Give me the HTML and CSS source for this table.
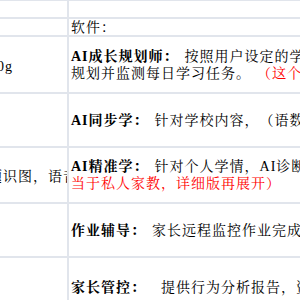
FILE: index.html
```html
<!DOCTYPE html>
<html lang="zh">
<head>
<meta charset="utf-8">
<title>功能表</title>
<link rel="stylesheet" href="styles.css">
</head>
<body>
<div class="sheet">
  <div class="cell left"></div>
  <div class="cell right"></div>

  <div class="cell left"></div>
  <div class="cell right"><p>软件：</p></div>

  <div class="cell left"><p>重量1500g</p></div>
  <div class="cell right">
    <p><b>AI成长规划师：</b><span class="gap"></span>按照用户设定的学习目标，</p>
    <p>规划并监测每日学习任务。<span class="gap"></span><span class="red">（这个功能</span></p>
  </div>

  <div class="cell left"></div>
  <div class="cell right">
    <p><b>AI同步学：</b><span class="gap"></span>针对学校内容，（语数英</p>
  </div>

  <div class="cell left"><p>拍照搜题识图，语音</p></div>
  <div class="cell right">
    <p><b>AI精准学：</b><span class="gap"></span>针对个人学情，AI诊断</p>
    <p class="red">当于私人家教，详细版再展开）</p>
  </div>

  <div class="cell left"></div>
  <div class="cell right">
    <p><b>作业辅导：</b><span class="gap"></span>家长远程监控作业完成情况</p>
  </div>

  <div class="cell left"></div>
  <div class="cell right">
    <p><b>家长管控：</b><span class="gap wide"></span>提供行为分析报告，资</p>
  </div>
</div>
</body>
</html>
```

FILE: styles.css
```css
html, body {
  margin: 0;
  padding: 0;
  overflow: hidden;
  background: #ffffff;
}

body {
  font-family: "Liberation Serif", "Noto Serif CJK SC", "Noto Sans CJK SC", serif;
  font-size: 14px;
  color: #000000;
  text-spacing-trim: space-all;
}

.sheet {
  display: grid;
  grid-template-columns: 129px 1fr;
  grid-template-rows: 18px 18px 57px 54px 56px 54px 60px;
  margin: -1px 0 0 -60px;
  border-top: 2px solid #e1e5ec;
}

.cell {
  box-sizing: border-box;
  border-bottom: 2px solid #e1e5ec;
  display: flex;
  flex-direction: column;
  justify-content: center;
  white-space: nowrap;
  min-width: 0;
  letter-spacing: 1px;
  line-height: 17px;
}

.cell p {
  margin: 0;
}

.left {
  border-right: 2px solid #e1e5ec;
  overflow: hidden;
  padding: 3px 0 0 3px;
}

.right {
  padding-left: 2px;
}

b {
  font-weight: 700;
}

.gap {
  display: inline-block;
  width: 6px;
}

.gap.wide {
  width: 15px;
}

.red {
  color: #ff0000;
}
```
